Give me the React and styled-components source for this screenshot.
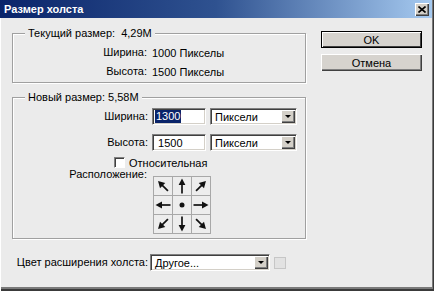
import React from 'react'
import styled, { createGlobalStyle } from 'styled-components'

const GlobalStyle = createGlobalStyle`
  html, body {
    margin: 0;
    padding: 0;
    background: #ebebeb;
  }
  body {
    font-family: "Liberation Sans", Arial, sans-serif;
    font-size: 11px;
    color: #000;
  }
  * {
    box-sizing: border-box;
  }
`

const Window = styled.div`
  width: 434px;
  height: 291px;
  background: #ebebeb;
  display: flex;
  flex-direction: column;
  overflow: hidden;
  box-shadow: inset 1px 0 #ffffff, inset -1px -2px #3a3a3a, inset -2px -4px #7a7a7a;
`

const TitleBar = styled.div`
  height: 18px;
  margin-right: 2px;
  padding: 0 3px 0 4px;
  background: linear-gradient(to right, #0a246a 0%, #2f5290 50%, #a6caf0 100%);
  display: flex;
  align-items: center;
  justify-content: space-between;
`

const Title = styled.span`
  color: #fff;
  font-weight: bold;
  font-size: 11px;
`

const CloseButton = styled.button`
  width: 14px;
  height: 13px;
  padding: 0;
  border: none;
  background: #d4d0c8;
  box-shadow: inset 1px 1px #fff, inset -1px -1px #404040, inset -2px -2px #808080;
  display: flex;
  align-items: center;
  justify-content: center;
`

const Body = styled.div`
  flex: 1;
  display: flex;
  gap: 15px;
  padding-left: 12px;
`

const Main = styled.div`
  width: 294px;
  padding-top: 9px;
  display: flex;
  flex-direction: column;
`

const Side = styled.div`
  width: 101px;
  padding-top: 13px;
  display: flex;
  flex-direction: column;
  gap: 6px;
`

const Group = styled.fieldset`
  margin: 0;
  min-width: 0;
  padding: ${p => p.$pad};
  border: 1px solid #a0a0a0;
  box-shadow: inset 1px 1px #fff, 1px 1px #fff;
  & + & {
    margin-top: 8px;
  }
`

const Legend = styled.legend`
  margin-left: 12px;
  padding: 0 3px;
  line-height: 13px;
  background: #ebebeb;
`

const Row = styled.div`
  display: flex;
  align-items: ${p => p.$align || 'center'};
  gap: ${p => p.$gap}px;
  height: ${p => p.$h}px;
  margin-top: ${p => p.$mt || 0}px;
`

const Label = styled.span`
  width: ${p => p.$w}px;
  text-align: right;
  flex-shrink: 0;
  line-height: 13px;
`

const Sunken = styled.div`
  width: ${p => p.$w}px;
  height: 17px;
  background: #fff;
  border: 1px solid;
  border-color: #808080 #fff #fff #808080;
  box-shadow: inset 1px 1px #404040, inset -1px -1px #d4d0c8;
  display: flex;
  align-items: center;
  padding-left: 2px;
`

const Selected = styled.span`
  background: #0a246a;
  color: #fff;
  line-height: 13px;
  padding: 0 1px;
`

const SelectText = styled.span`
  flex: 1;
  padding-left: 2px;
`

const DropButton = styled.span`
  width: 14px;
  height: 13px;
  margin-right: 1px;
  background: #d4d0c8;
  box-shadow: inset 1px 1px #fff, inset -1px -1px #404040, inset -2px -2px #808080;
  display: flex;
  align-items: center;
  justify-content: center;
  &::after {
    content: '';
    border-left: 3px solid transparent;
    border-right: 3px solid transparent;
    border-top: 3px solid #000;
  }
`

const CheckBox = styled.span`
  width: 11px;
  height: 11px;
  margin-left: 101px;
  background: #fff;
  border: 1px solid;
  border-color: #808080 #fff #fff #808080;
  box-shadow: inset 1px 1px #404040;
`

const AnchorGrid = styled.div`
  margin-top: 8px;
  display: grid;
  grid-template-columns: repeat(3, 18px);
  grid-auto-rows: 18px;
  gap: 1px;
  background: #a8a8a8;
  border: 1px solid #a8a8a8;
`

const Cell = styled.div`
  background: #ededed;
  display: flex;
  align-items: center;
  justify-content: center;
`

const Swatch = styled.span`
  width: 12px;
  height: 12px;
  margin-left: 2px;
  background: #e2e2e2;
  border: 1px solid #c6c6c6;
`

const Button = styled.button`
  width: 101px;
  height: 17px;
  padding: 0;
  border: none;
  font: inherit;
  color: #000;
  background: #d6d3ce;
  box-shadow: ${p =>
    p.$default
      ? 'inset 0 0 0 1px #000, inset 2px 2px #fff, inset -2px -2px #404040'
      : 'inset 1px 1px #fff, inset -1px -1px #404040, inset -2px -2px #808080'};
`

const anchors = [315, 0, 45, 270, null, 90, 225, 180, 135]

const Arrow = ({ angle }) => {
  const diag = angle % 90 !== 0
  return (
    <svg width="16" height="16" viewBox="0 0 16 16">
      {angle === null ? (
        <circle cx="8" cy="8" r="2.5" fill="#111" />
      ) : (
        <g transform={`rotate(${angle} 8 8)`} fill="#111" stroke="#111">
          <line x1="8" y1={diag ? 15 : 15.5} x2="8" y2="6" strokeWidth="1.7" />
          <polygon points={diag ? '8,1 4.3,7.5 11.7,7.5' : '8,0.5 4.6,7 11.4,7'} stroke="none" />
        </g>
      )}
    </svg>
  )
}

const Select = ({ w, children }) => (
  <Sunken $w={w}>
    <SelectText>{children}</SelectText>
    <DropButton />
  </Sunken>
)

export default function App() {
  return (
    <>
      <GlobalStyle />
      <Window>
        <TitleBar>
          <Title>Размер холста</Title>
          <CloseButton>
            <svg width="8" height="7" viewBox="0 0 8 7">
              <path d="M0.5 0.5 L7.5 6.5 M7.5 0.5 L0.5 6.5" stroke="#000" strokeWidth="1.6" />
            </svg>
          </CloseButton>
        </TitleBar>
        <Body>
          <Main>
            <Group $pad="3px 0 1px">
              <Legend>Текущий размер:&nbsp; 4,29M</Legend>
              <Row $gap={5} $h={19}>
                <Label $w={134}>Ширина:</Label>
                <span>1000 Пикселы</span>
              </Row>
              <Row $gap={5} $h={19}>
                <Label $w={134}>Высота:</Label>
                <span>1500 Пикселы</span>
              </Row>
            </Group>
            <Group $pad="4px 0 4px">
              <Legend>Новый размер: 5,58M</Legend>
              <Row $gap={4} $h={17}>
                <Label $w={135}>Ширина:</Label>
                <Sunken $w={54}>
                  <Selected>1300</Selected>
                </Sunken>
                <Select w={87}>Пиксели</Select>
              </Row>
              <Row $gap={4} $h={17} $mt={9}>
                <Label $w={135}>Высота:</Label>
                <Sunken $w={54}>
                  <span>&nbsp;1500</span>
                </Sunken>
                <Select w={87}>Пиксели</Select>
              </Row>
              <Row $gap={4} $h={13} $mt={5}>
                <CheckBox />
                <span>Относительная</span>
              </Row>
              <Row $gap={6} $mt={-1} $align="flex-start">
                <Label $w={134}>Расположение:</Label>
                <AnchorGrid>
                  {anchors.map((a, i) => (
                    <Cell key={i}>
                      <Arrow angle={a} />
                    </Cell>
                  ))}
                </AnchorGrid>
              </Row>
            </Group>
            <Row $gap={2} $h={17} $mt={15}>
              <Label $w={136}>Цвет расширения холста:</Label>
              <Select w={120}>Другое...</Select>
              <Swatch />
            </Row>
          </Main>
          <Side>
            <Button $default>OK</Button>
            <Button>Отмена</Button>
          </Side>
        </Body>
      </Window>
    </>
  )
}
